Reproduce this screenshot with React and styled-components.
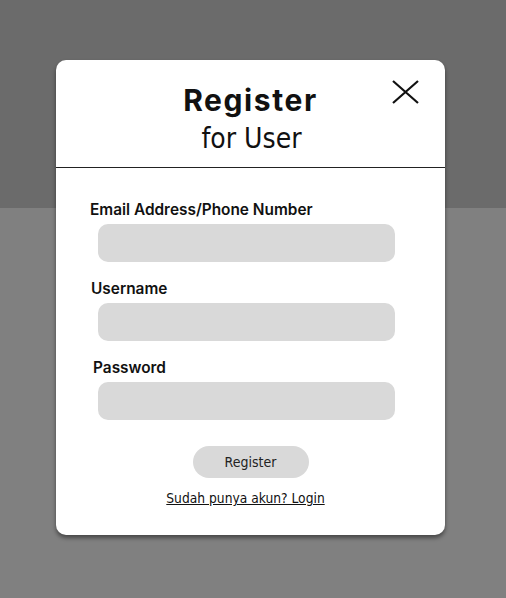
import React from 'react';
import styled, { createGlobalStyle } from 'styled-components';

const GlobalStyle = createGlobalStyle`
  html, body {
    margin: 0;
    padding: 0;
    height: 100%;
  }
  body {
    font-family: Inter, "Liberation Sans", sans-serif;
    background: #808080;
  }
`;

const Page = styled.div`
  position: relative;
  width: 506px;
  height: 598px;
  display: flex;
  flex-direction: column;
  overflow: hidden;
`;

const TopBand = styled.div`
  height: 208px;
  background: #6b6b6b;
`;

const BottomBand = styled.div`
  flex: 1;
  background: #808080;
`;

const Modal = styled.div`
  position: absolute;
  left: 56px;
  top: 60px;
  width: 389px;
  height: 475px;
  background: #fff;
  border-radius: 10px;
  box-shadow: 0 3px 4px rgba(0, 0, 0, 0.45);
  display: flex;
  flex-direction: column;
`;

const Header = styled.div`
  position: relative;
  height: 108px;
  border-bottom: 1.5px solid #222;
  display: flex;
  flex-direction: column;
  align-items: center;
  padding-top: 22px;
  box-sizing: border-box;
`;

const Title = styled.h1`
  margin: 0;
  font-family: Inter, "Liberation Sans", sans-serif;
  font-size: 30px;
  font-weight: 700;
  line-height: 36px;
  color: #111;
  letter-spacing: 1.6px;
`;

const Subtitle = styled.div`
  font-family: "DejaVu Sans Condensed", "Liberation Sans", sans-serif;
  font-size: 28px;
  font-weight: 300;
  line-height: 32px;
  color: #111;
  margin-top: 5px;
  margin-left: 2px;
`;

const CloseButton = styled.button`
  position: absolute;
  top: 19px;
  right: 26px;
  width: 28px;
  height: 26px;
  padding: 0;
  border: none;
  background: none;
  cursor: pointer;
  display: flex;
  align-items: center;
  justify-content: center;
`;

const Form = styled.form`
  display: flex;
  flex-direction: column;
  padding-top: 33px;
`;

const Field = styled.div`
  display: flex;
  flex-direction: column;
  margin: 0 50px 18px 34px;
`;

const Label = styled.label`
  font-size: 15.4px;
  font-weight: 600;
  color: #111;
  margin-left: ${({ $indent }) => $indent || 0}px;
  line-height: 18px;
  margin-bottom: 5px;
`;

const Input = styled.input`
  margin-left: 8px;
  height: 38px;
  border: none;
  border-radius: 10px;
  background: #d9d9d9;
  outline: none;
  padding: 0 12px;
  font-size: 14px;
`;

const Actions = styled.div`
  display: flex;
  flex-direction: column;
  align-items: center;
  gap: 12px;
  margin-top: 8px;
`;

const SubmitButton = styled.button`
  width: 116px;
  height: 32px;
  border: none;
  border-radius: 16px;
  background: #d9d9d9;
  font-family: "DejaVu Sans Condensed", "Liberation Sans", sans-serif;
  font-size: 14px;
  color: #222;
  cursor: pointer;
`;

const LoginLink = styled.a`
  font-family: "DejaVu Sans Condensed", "Liberation Sans", sans-serif;
  font-size: 13.7px;
  color: #111;
  text-decoration: underline;
  cursor: pointer;
  margin-right: 10px;
`;

const CloseIcon = () => (
  <svg width="27" height="24" viewBox="0 0 27 24">
    <path d="M1 1 L26 23 M26 1 L1 23" stroke="#111" strokeWidth="2.2" fill="none" />
  </svg>
);

export default function App() {
  return (
    <>
      <GlobalStyle />
      <Page>
        <TopBand />
        <BottomBand />
        <Modal>
          <Header>
            <Title>Register</Title>
            <Subtitle>for User</Subtitle>
            <CloseButton type="button" aria-label="Close">
              <CloseIcon />
            </CloseButton>
          </Header>
          <Form onSubmit={(e) => e.preventDefault()}>
            <Field>
              <Label>Email Address/Phone Number</Label>
              <Input type="text" />
            </Field>
            <Field>
              <Label $indent={1}>Username</Label>
              <Input type="text" />
            </Field>
            <Field>
              <Label $indent={3}>Password</Label>
              <Input type="password" />
            </Field>
            <Actions>
              <SubmitButton type="submit">Register</SubmitButton>
              <LoginLink>Sudah punya akun? Login</LoginLink>
            </Actions>
          </Form>
        </Modal>
      </Page>
    </>
  );
}
